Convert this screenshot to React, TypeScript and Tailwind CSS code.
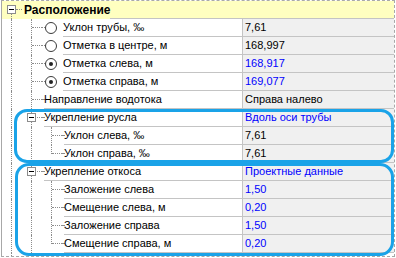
import type { ReactNode } from "react"

type Guide = "none" | "full" | "half"

type Row = {
  label: string
  value?: string
  blue?: boolean
  level: 0 | 1 | 2
  kind?: "expander" | "radio" | "plain"
  checked?: boolean
  // vertical guides for each indent column: full = through, half = ends at row centre (last child)
  guides: Guide[]
}

const ROWS: Row[] = [
  { label: "Уклон трубы, ‰", value: "7,61", level: 1, kind: "radio", guides: ["full", "full"] },
  { label: "Отметка в центре, м", value: "168,997", level: 1, kind: "radio", guides: ["full", "full"] },
  { label: "Отметка слева, м", value: "168,917", blue: true, level: 1, kind: "radio", checked: true, guides: ["full", "full"] },
  { label: "Отметка справа, м", value: "169,077", blue: true, level: 1, kind: "radio", checked: true, guides: ["full", "full"] },
  { label: "Направление водотока", value: "Справа налево", level: 1, guides: ["full", "full"] },
  { label: "Укрепление русла", value: "Вдоль оси трубы", blue: true, level: 1, kind: "expander", guides: ["full", "full"] },
  { label: "Уклон слева, ‰", value: "7,61", level: 2, guides: ["full", "full", "full"] },
  { label: "Уклон справа, ‰", value: "7,61", level: 2, guides: ["full", "full", "half"] },
  { label: "Укрепление откоса", value: "Проектные данные", blue: true, level: 1, kind: "expander", guides: ["full", "full"] },
  { label: "Заложение слева", value: "1,50", blue: true, level: 2, guides: ["full", "full", "full"] },
  { label: "Смещение слева, м", value: "0,20", blue: true, level: 2, guides: ["full", "full", "full"] },
  { label: "Заложение справа", value: "1,50", blue: true, level: 2, guides: ["full", "full", "full"] },
  { label: "Смещение справа, м", value: "0,20", blue: true, level: 2, guides: ["full", "full", "half"] },
]

const dotV = "border-l border-dotted border-[#8c8c8c]"
const dotH = "border-t border-dotted border-[#8c8c8c]"

function MinusBox() {
  return (
    <div className="relative z-10 flex h-[9px] w-[9px] items-center justify-center border border-[#8c8c8c] bg-white">
      <div className="h-px w-[5px] bg-black" />
    </div>
  )
}

function Radio({ checked }: { checked?: boolean }) {
  return (
    <div className="flex h-[12px] w-[12px] shrink-0 items-center justify-center rounded-full border border-[#3a3a3a] bg-white">
      {checked && <div className="h-[4px] w-[4px] rounded-full bg-[#222]" />}
    </div>
  )
}

// one 20px indent column of the tree
function IndentCol({ guide, branch, children }: { guide: Guide; branch?: boolean; children?: ReactNode }) {
  return (
    <div className="relative flex h-full w-[20px] shrink-0 items-center">
      {guide !== "none" && (
        <div className={`absolute left-[9px] top-0 ${guide === "half" ? "h-[9px]" : "h-full"} ${dotV}`} />
      )}
      {branch && <div className={`absolute left-[10px] top-[8px] w-[10px] ${dotH}`} />}
      {children && <div className="absolute left-[5px] top-[4px]">{children}</div>}
    </div>
  )
}

function TreeRow({ row }: { row: Row }) {
  const cols = row.guides.map((g, i) => {
    const isOwn = i === row.level
    if (!isOwn) return <IndentCol key={i} guide={g} />
    return (
      <IndentCol key={i} guide={g} branch>
        {row.kind === "expander" ? <MinusBox /> : null}
      </IndentCol>
    )
  })

  return (
    <div className="flex h-[18px]">
      <div className="flex h-full w-[240px] shrink-0">
        {cols}
        {row.kind === "radio" ? (
          <>
            <div className="flex h-full w-[3px] items-center">
              <div className={`mt-[-1px] w-full ${dotH}`} />
            </div>
            <div className="flex h-full items-center pb-px">
              <Radio checked={row.checked} />
            </div>
            <div className="ml-[6px] flex h-full flex-1 items-center border-b border-[#c4c4c4] pb-px">
              {row.label}
            </div>
          </>
        ) : (
          <>
            <div className="flex h-full w-[2px] items-center">
              <div className={`mt-[-1px] w-full ${dotH}`} />
            </div>
            <div className="flex h-full flex-1 items-center border-b border-[#c4c4c4] pb-px">
              {row.label}
            </div>
          </>
        )}
      </div>
      <div
        className={`flex h-full flex-1 items-center border-b border-l border-[#c4c4c4] bg-[#f0f0f0] pb-px pl-[2px] ${
          row.blue ? "text-[#0000ff]" : "text-black"
        }`}
      >
        {row.value}
      </div>
    </div>
  )
}

export default function App() {
  return (
    <div
      className="relative h-[258px] w-[396px] overflow-hidden bg-white text-[11px] text-black"
      style={{ fontFamily: '"Liberation Sans", Arial, sans-serif' }}
    >
      <div className="ml-[1px] h-[257px] w-[394px] border border-dashed border-[#a8a8a8] [border-left-style:solid]">
        {/* group header */}
        <div className="flex h-[18px] bg-[#ffffc0]">
          <div className="relative flex h-full w-[20px] shrink-0 items-center">
            <div className={`absolute left-[9px] top-[13px] h-[5px] ${dotV}`} />
            <div className={`absolute left-[14px] top-[8px] w-[6px] ${dotH}`} />
            <div className="absolute left-[5px] top-[4px]">
              <MinusBox />
            </div>
          </div>
          <div className="flex h-full items-center pb-px pl-[2px] text-[12px] font-bold">Расположение</div>
          <div className="ml-auto w-[331px] border-b border-[#c4c4c4]" />
        </div>

        {ROWS.map((row) => (
          <TreeRow key={row.label} row={row} />
        ))}

        {/* guides continue under the last row */}
        <div className="flex h-[3px]">
          <IndentCol guide="full" />
          <IndentCol guide="full" />
          <div className="ml-[200px] h-full border-l border-[#c4c4c4]" />
        </div>
      </div>

      {/* highlight outlines */}
      <div className="pointer-events-none absolute left-[14px] top-[109px] h-[54px] w-[380px] rounded-[13px] border-[3px] border-[#1aa3e8]" />
      <div className="pointer-events-none absolute left-[15px] top-[163px] h-[93px] w-[379px] rounded-[14px] border-[3px] border-[#1aa3e8]" />
    </div>
  )
}
